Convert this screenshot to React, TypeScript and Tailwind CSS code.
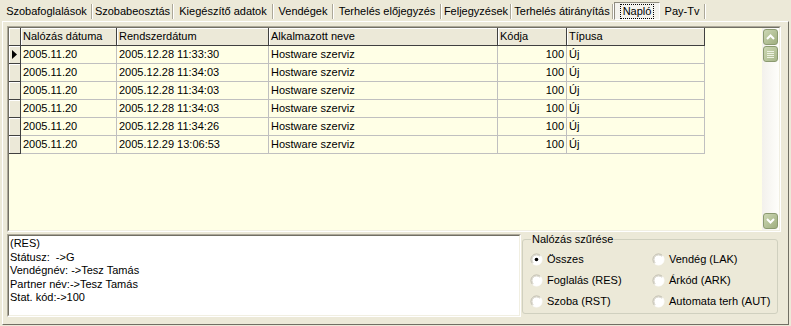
import React from "react"

const tabs = [
  { label: "Szobafoglalások", w: "w-[91px]" },
  { label: "Szobabeosztás", w: "w-[81px]" },
  { label: "Kiegészítő adatok", w: "w-[100px]" },
  { label: "Vendégek", w: "w-[60px]" },
  { label: "Terhelés előjegyzés", w: "w-[108px]" },
  { label: "Feljegyzések", w: "w-[70px]" },
  { label: "Terhelés átirányítás", w: "w-[102px]" },
  { label: "Napló", w: "w-[46px]", active: true },
  { label: "Pay-Tv", w: "w-[46px]" },
]

const columns = [
  { label: "Nalózás dátuma", w: "w-[96px]" },
  { label: "Rendszerdátum", w: "w-[152px]" },
  { label: "Alkalmazott neve", w: "w-[229px]" },
  { label: "Kódja", w: "w-[69px]" },
  { label: "Típusa", w: "w-[138px]" },
]

const rows = [
  ["2005.11.20", "2005.12.28 11:33:30", "Hostware szerviz", "100", "Új"],
  ["2005.11.20", "2005.12.28 11:34:03", "Hostware szerviz", "100", "Új"],
  ["2005.11.20", "2005.12.28 11:34:03", "Hostware szerviz", "100", "Új"],
  ["2005.11.20", "2005.12.28 11:34:03", "Hostware szerviz", "100", "Új"],
  ["2005.11.20", "2005.12.28 11:34:26", "Hostware szerviz", "100", "Új"],
  ["2005.11.20", "2005.12.29 13:06:53", "Hostware szerviz", "100", "Új"],
]

const memo = ["(RES)", "Státusz:  ->G", "Vendégnév: ->Tesz Tamás", "Partner név:->Tesz Tamás", "Stat. kód:->100"]

const filters = [
  ["Összes", "Vendég (LAK)"],
  ["Foglalás (RES)", "Árkód (ARK)"],
  ["Szoba (RST)", "Automata terh (AUT)"],
]

function Radio({ checked }: { checked?: boolean }) {
  return (
    <svg width="13" height="13" viewBox="0 0 13 13" className="shrink-0">
      <circle cx="6.5" cy="6.5" r="5.5" fill="#ffffff" />
      <path d="M2.6 10.4 A5.5 5.5 0 0 1 10.4 2.6" fill="none" stroke="#b8b5a6" strokeWidth="1" />
      <path d="M10.4 2.6 A5.5 5.5 0 0 1 2.6 10.4" fill="none" stroke="#ffffff" strokeWidth="1" />
      <path d="M3.3 9.7 A4.5 4.5 0 0 1 9.7 3.3" fill="none" stroke="#d6d3c6" strokeWidth="1" />
      {checked && <circle cx="6.5" cy="6.5" r="1.8" fill="#000000" />}
    </svg>
  )
}

function ScrollButton({ down }: { down?: boolean }) {
  return (
    <div className="w-[15px] h-[16px] rounded-[3px] border border-[#8b9a70] bg-gradient-to-br from-[#cdd8b4] to-[#9fae7f] flex items-center justify-center">
      <svg width="9" height="6" viewBox="0 0 9 6">
        <path d={down ? "M1 1 L4.5 4.5 L8 1" : "M1 5 L4.5 1.5 L8 5"} fill="none" stroke="#ffffff" strokeWidth="2" />
      </svg>
    </div>
  )
}

export default function App() {
  return (
    <div className="w-[791px] h-[326px] overflow-hidden bg-[#ECE9D8] text-black text-[11px] leading-none font-['Liberation_Sans',Arial,sans-serif]">
      {/* tabs */}
      <div className="flex h-[21px] pl-[2px] pt-[2px]">
        {tabs.map((t) =>
          t.active ? (
            <div
              key={t.label}
              className={`${t.w} h-[18px] flex items-center justify-center border border-t-[#8f8c7f] border-l-[#8f8c7f] border-b-white border-r-white bg-[#F4F3EE]`}
            >
              <span className="outline-1 outline-dotted outline-black px-[2px] py-[1px]">{t.label}</span>
            </div>
          ) : (
            <div key={t.label} className={`${t.w} h-[18px] flex items-center`}>
              <span className="flex-1 text-center whitespace-nowrap">{t.label}</span>
              <span className="w-[2px] h-[15px] border-l border-[#ACA899] border-r border-r-white" />
            </div>
          )
        )}
      </div>

      {/* sheet */}
      <div className="mx-[2px] h-[304px] border border-t-white border-l-white border-r-[#716F64] border-b-[#716F64] pl-[4px] pt-[4px]">
        {/* grid */}
        <div className="w-[774px] h-[206px] border border-t-[#ACA899] border-l-[#ACA899] border-b-white border-r-white">
          <div className="h-full border border-t-[#716F64] border-l-[#716F64] border-b-[#F1EFE2] border-r-[#F1EFE2] bg-[#FFFFE6] flex">
            <div className="flex-1 flex flex-col">
              <div className="flex h-[18px]">
                <div className="w-[12px] bg-[#ECE9D8] border-r border-b border-[#404040] shadow-[inset_1px_1px_0_#ffffff]" />
                {columns.map((c) => (
                  <div
                    key={c.label}
                    className={`${c.w} bg-[#ECE9D8] border-r border-b border-[#404040] shadow-[inset_1px_1px_0_#ffffff] flex items-center pl-[2px]`}
                  >
                    {c.label}
                  </div>
                ))}
              </div>
              {rows.map((r, i) => (
                <div key={i} className="flex h-[18px]">
                  <div className="w-[12px] bg-[#ECE9D8] border-r border-b border-[#404040] shadow-[inset_1px_1px_0_#ffffff] flex items-center justify-center">
                    {i === 0 && (
                      <svg width="5" height="9" viewBox="0 0 5 9">
                        <path d="M0 0 L5 4.5 L0 9 Z" fill="#000000" />
                      </svg>
                    )}
                  </div>
                  {r.map((v, j) => (
                    <div
                      key={j}
                      className={`${columns[j].w} border-r border-b border-[#C0C0C0] flex items-center px-[2px] ${j === 3 ? "justify-end" : ""}`}
                    >
                      {v}
                    </div>
                  ))}
                </div>
              ))}
            </div>
            {/* scrollbar */}
            <div className="w-[17px] h-full bg-gradient-to-r from-[#F3F1EC] to-[#FEFEFB] flex flex-col items-start pl-[1px] pt-[1px] pb-[1px]">
              <ScrollButton />
              <div className="mt-[1px] w-[15px] h-[16px] rounded-[3px] border border-[#8b9a70] bg-gradient-to-br from-[#cdd8b4] to-[#a8b78a] flex flex-col items-center justify-center gap-[1px]">
                <span className="w-[7px] h-[1px] bg-[#eef2e2]" />
                <span className="w-[7px] h-[1px] bg-[#eef2e2]" />
                <span className="w-[7px] h-[1px] bg-[#eef2e2]" />
                <span className="w-[7px] h-[1px] bg-[#eef2e2]" />
              </div>
              <div className="flex-1" />
              <ScrollButton down />
            </div>
          </div>
        </div>

        {/* bottom */}
        <div className="flex mt-[2px] gap-[1px]">
          <div className="w-[514px] h-[83px] border border-t-[#ACA899] border-l-[#ACA899] border-b-white border-r-white">
            <div className="h-full border border-t-[#716F64] border-l-[#716F64] border-b-[#F1EFE2] border-r-[#F1EFE2] bg-white pl-[1px] pt-[1px] leading-[13.5px]">
              {memo.map((m) => (
                <div key={m} className="whitespace-pre">
                  {m}
                </div>
              ))}
            </div>
          </div>
          <fieldset className="w-[256px] h-[81px] mt-[-1px] border border-[#D0D0BF] rounded-[3px] pl-[7px] pr-[2px] pb-[2px]">
            <legend className="ml-[1px] px-[1px] leading-[12px]">Nalózás szűrése</legend>
            <div className="grid grid-cols-[122px_1fr] gap-y-[8px] pt-[8px]">
              {filters.map((pair, i) =>
                pair.map((label, j) => (
                  <div key={label} className="flex items-center gap-[4px] h-[13px] whitespace-nowrap">
                    <Radio checked={i === 0 && j === 0} />
                    <span>{label}</span>
                  </div>
                ))
              )}
            </div>
          </fieldset>
        </div>
      </div>
    </div>
  )
}
